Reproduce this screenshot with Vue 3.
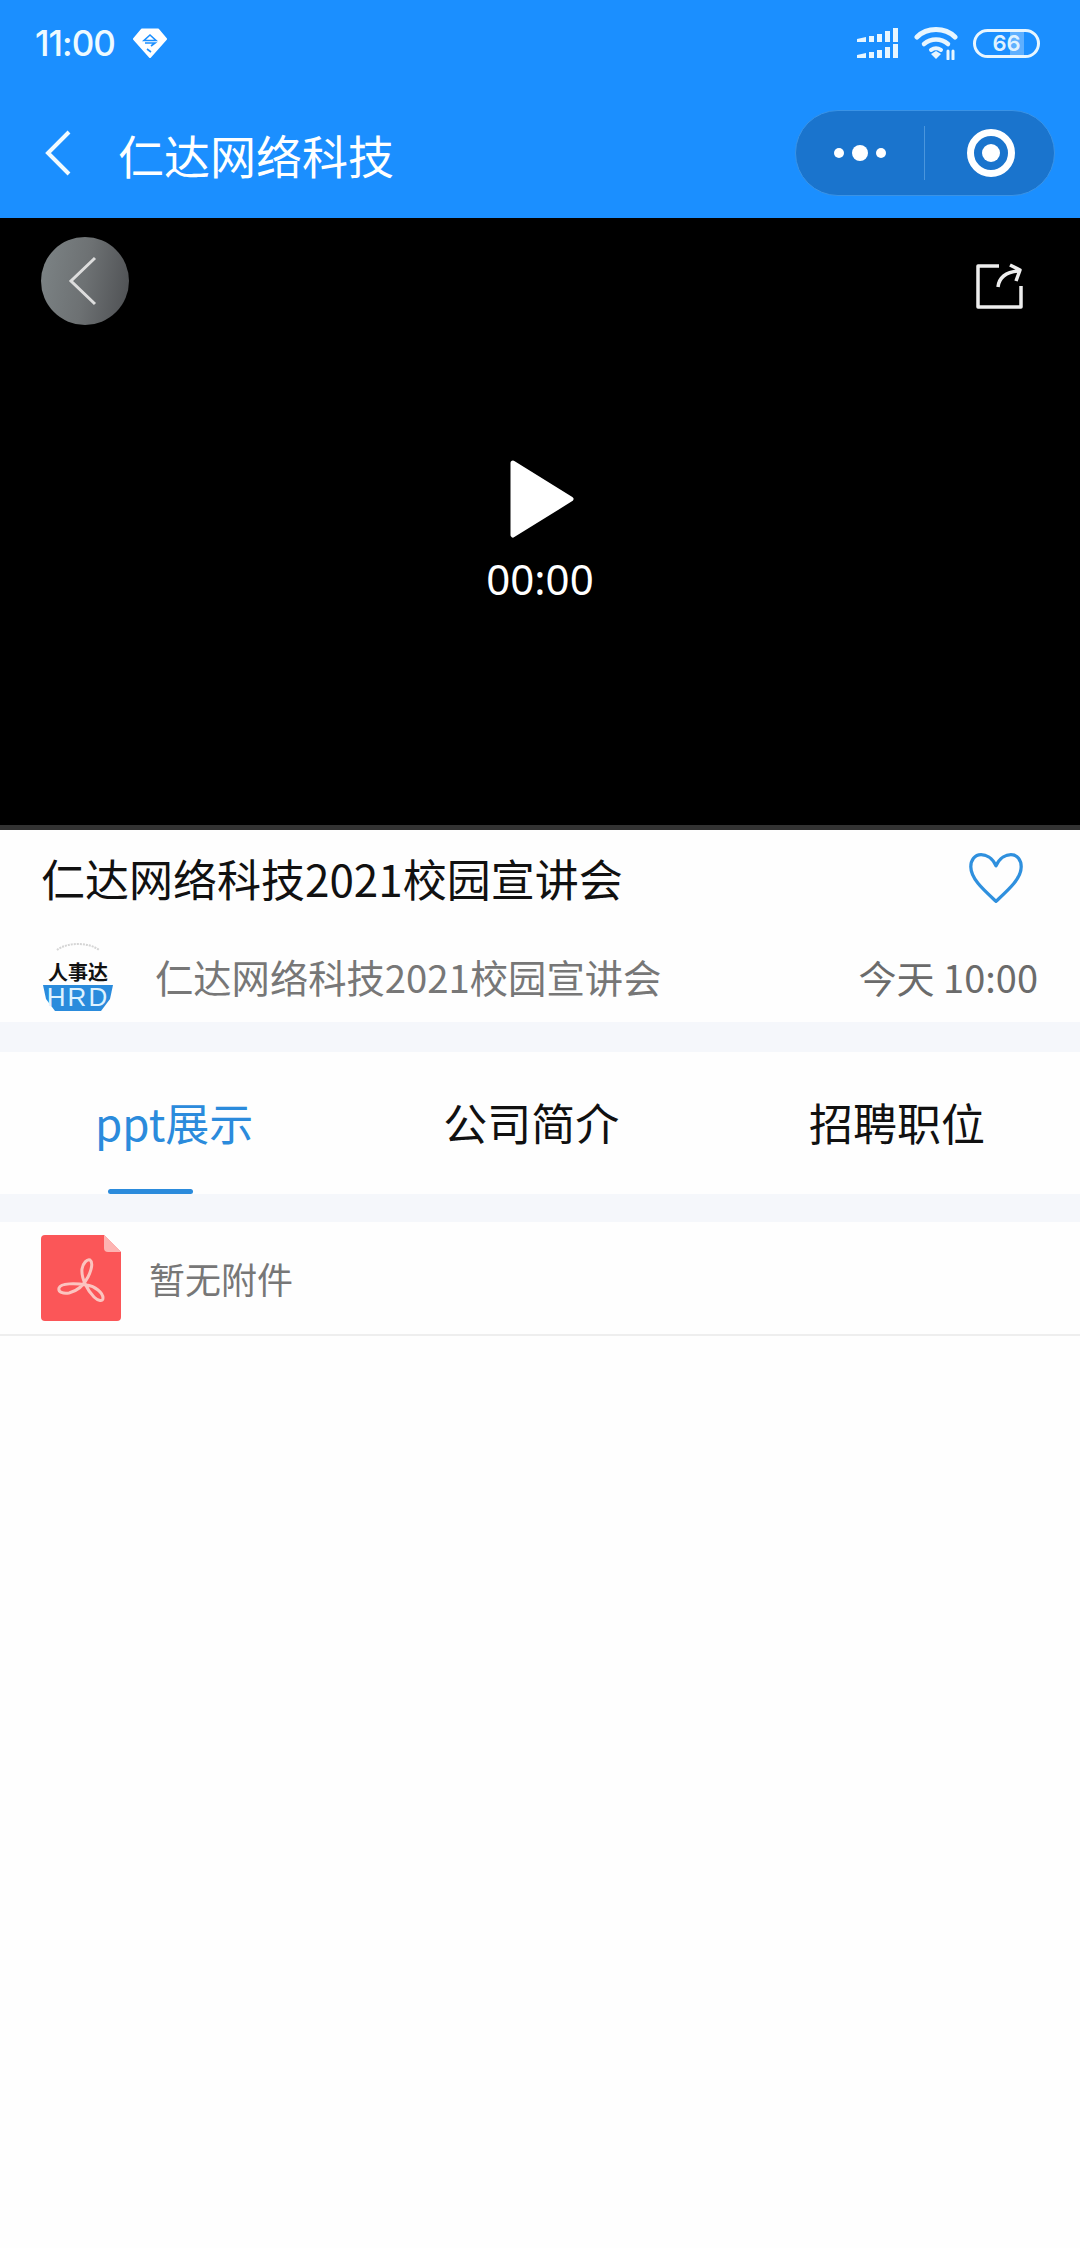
<template>
  <div class="page">
    <header class="topbar">
      <div class="status">
        <div class="status-left">
          <span class="time">11:00</span>
          <svg class="badge" width="34" height="30" viewBox="0 0 34 30">
            <path d="M9 1.5h16l8 9.5L17 29 1 11z" fill="#fff" stroke="#fff" stroke-linejoin="round" stroke-width="2" />
            <path d="M17 7l-6 5.5h12zM12 15h10l-4 3M14 21l4 3" fill="none" stroke="#1b8fff" stroke-width="1.6" />
          </svg>
        </div>
        <div class="status-right">
          <svg width="42" height="31" viewBox="0 0 42 31" fill="#e8f6ff">
            <path d="M0 11l9-2v5H0zM12 8h5v6h-5zM20 6h5v8h-5zM28 3h5v11h-5zM36 0h5v14h-5z" />
            <path d="M0 27l9-2v5H0zM12 24h5v6h-5zM20 22h5v8h-5zM28 19h5v11h-5zM36 16h5v14h-5z" />
          </svg>
          <svg width="44" height="34" viewBox="0 0 44 34" fill="none" stroke="#e8f6ff" stroke-linecap="round">
            <path d="M3 11C13 1 31 1 41 11" stroke-width="5" />
            <path d="M10 18c7-6 17-6 24 0" stroke-width="4.500" />
            <path d="M17 24c3-2 7-2 10 0" stroke-width="4" />
            <path d="M22 33l-5-5 5-3 5 3z" fill="#e8f6ff" stroke="none" />
            <path d="M34 25v8M39 25v8" stroke-width="3" />
          </svg>
          <div class="battery"><span>66</span></div>
        </div>
      </div>
      <div class="nav">
        <svg class="nav-back" width="28" height="48" viewBox="0 0 28 48">
          <path d="M25 3L4 24l21 21" fill="none" stroke="#f2fbff" stroke-width="4" />
        </svg>
        <h1 class="nav-title">仁达网络科技</h1>
        <div class="capsule">
          <div class="capsule-dots">
            <i class="dot"></i><i class="dot big"></i><i class="dot"></i>
          </div>
          <div class="capsule-line"></div>
          <div class="capsule-target"><i></i></div>
        </div>
      </div>
    </header>

    <section class="video">
      <div class="video-top">
        <div class="round-back">
          <svg width="30" height="50" viewBox="0 0 30 50">
            <path d="M27 2L3 25l24 23" fill="none" stroke="#ddd" stroke-width="3" />
          </svg>
        </div>
        <svg class="share" width="48" height="48" viewBox="0 0 48 48" fill="none" stroke="#eee" stroke-width="3.500" stroke-linejoin="round">
          <path d="M24 4H3v41h43V24" />
          <path d="M23 25c1-9 8-15 21-16M35 3l10 5-4 11" />
        </svg>
      </div>
      <div class="video-center">
        <svg width="66" height="80" viewBox="0 0 66 80">
          <path d="M4 4l58 36L4 76z" fill="#fff" stroke="#fff" stroke-width="5" stroke-linejoin="round" />
        </svg>
        <span class="video-time">00:00</span>
      </div>
    </section>

    <section class="info">
      <div class="title-row">
        <h2 class="title">仁达网络科技2021校园宣讲会</h2>
        <svg class="heart" width="56" height="54" viewBox="0 0 60 56">
          <path d="M30 15C26 6 19 3 14 3 7 3 3 9 3 16c0 13 14 25 27 37 13-12 27-24 27-37 0-7-4-13-11-13-5 0-12 3-16 12z" fill="none" stroke="#2f90de" stroke-width="3.500" stroke-linejoin="round" />
        </svg>
      </div>
      <div class="meta-row">
        <svg class="logo" width="70" height="70" viewBox="0 0 70 70">
          <path d="M14 8C24 0 46 0 56 8" fill="none" stroke="#d5d5d5" stroke-width="2" stroke-dasharray="2 1" />
          <text x="35" y="38" text-anchor="middle" class="logo-cn">人事达</text>
          <path d="M0 43h70l-3 14-9 12H12L3 57z" fill="#2a8bdc" />
          <text x="35" y="64" text-anchor="middle" class="logo-en">HRD</text>
        </svg>
        <span class="meta-name">仁达网络科技2021校园宣讲会</span>
        <span class="meta-date">今天 10:00</span>
      </div>
    </section>

    <div class="band"></div>

    <nav class="tabs">
      <div v-for="tab in tabs" :key="tab" class="tab" :class="{ active: tab === current }">
        {{ tab }}
      </div>
    </nav>

    <div class="band thin"></div>

    <div class="attach">
      <svg class="pdf" width="80" height="86" viewBox="0 0 80 86">
        <path d="M4 0h59l17 17v65a4 4 0 0 1-4 4H4a4 4 0 0 1-4-4V4a4 4 0 0 1 4-4z" fill="#fb5658" />
        <path d="M63 0l17 17H67a4 4 0 0 1-4-4z" fill="#fdb4b2" />
        <path d="M18 53C20 48 34 48 46 50 54 51 62 58 62 63 62 67 57 66 53 62 47 56 40 44 41 34 42 28 46 24 49 25 52 27 51 34 47 42 43 50 36 56 28 58 22 59 17 57 18 53z" fill="none" stroke="#fbc4bf" stroke-width="3" stroke-linejoin="round" />
      </svg>
      <span class="attach-text">暂无附件</span>
    </div>
  </div>
</template>

<script setup>
import { ref } from 'vue'

const tabs = ['ppt展示', '公司简介', '招聘职位']
const current = ref('ppt展示')
</script>

<style>
html,
body {
  margin: 0;
  background: #fefefe;
}
</style>

<style scoped>
.page {
  width: 1080px;
  height: 2248px;
  overflow: hidden;
  background: #fefefe;
  font-family: "Noto Sans CJK SC", "Noto Sans", sans-serif;
}

.topbar {
  height: 218px;
  background: #1b8fff;
  box-sizing: border-box;
  color: #fff;
}

.status {
  height: 86px;
  padding: 0 40px 0 35px;
  box-sizing: border-box;
  display: flex;
  justify-content: space-between;
  align-items: center;
}

.status-left {
  display: flex;
  align-items: center;
  gap: 18px;
}

.time {
  font-family: Inter, sans-serif;
  font-size: 35px;
  font-weight: 500;
  color: #eefaff;
  letter-spacing: -1px;
}

.status-right {
  display: flex;
  align-items: center;
  gap: 15px;
}

.battery {
  width: 67px;
  height: 29px;
  box-sizing: border-box;
  border: 3px solid #e8f6ff;
  border-radius: 15px;
  background: linear-gradient(90deg, #1b8fff 55%, #5fb0ff 56%, #5fb0ff 78%, #1b8fff 79%);
  display: flex;
  justify-content: center;
  align-items: center;
  font-family: Inter, sans-serif;
  font-size: 22px;
  font-weight: 600;
  color: #dff2ff;
}

.nav {
  height: 132px;
  padding: 2px 25px 0 44px;
  box-sizing: border-box;
  display: flex;
  align-items: center;
}

.nav-back {
  flex: none;
}

.nav-title {
  margin: 2px 0 0 46px;
  font-size: 46px;
  font-weight: 400;
  line-height: 1;
  flex: 1;
}

.capsule {
  width: 260px;
  height: 86px;
  box-sizing: border-box;
  border: 1px solid #3a93e6;
  border-radius: 43px;
  background: #1a74cd;
  display: flex;
  align-items: center;
}

.capsule-dots {
  width: 128px;
  display: flex;
  justify-content: center;
  align-items: center;
  gap: 8px;
}

.dot {
  width: 10px;
  height: 10px;
  border-radius: 50%;
  background: #fff;
}

.dot.big {
  width: 16px;
  height: 16px;
}

.capsule-line {
  width: 1px;
  height: 54px;
  background: #4a96dd;
}

.capsule-target {
  flex: 1;
  padding-left: 2px;
  display: flex;
  justify-content: center;
  align-items: center;
}

.capsule-target i {
  width: 48px;
  height: 48px;
  box-sizing: border-box;
  border: 7px solid #fff;
  border-radius: 50%;
  display: flex;
  justify-content: center;
  align-items: center;
}

.capsule-target i::after {
  content: "";
  width: 18px;
  height: 18px;
  border-radius: 50%;
  background: #fff;
}

.video {
  position: relative;
  height: 612px;
  box-sizing: border-box;
  background: #000;
  border-bottom: 5px solid #333;
}

.video-top {
  padding: 19px 57px 0 41px;
  display: flex;
  justify-content: space-between;
  align-items: flex-start;
}

.round-back {
  width: 88px;
  height: 88px;
  border-radius: 50%;
  background: linear-gradient(100deg, #7d8486 0%, #6d7173 50%, #4d4f52 100%);
  display: flex;
  justify-content: center;
  align-items: center;
  padding-right: 4px;
  box-sizing: border-box;
}

.share {
  margin-top: 25px;
}

.video-center {
  position: absolute;
  left: 0;
  right: 0;
  top: 241px;
  display: flex;
  flex-direction: column;
  align-items: center;
  color: #fff;
}

.video-center svg {
  margin-left: 4px;
}

.video-time {
  font-size: 42px;
  line-height: 60px;
  margin-top: 10px;
  font-family: "Noto Sans", sans-serif;
}

.info {
  height: 192px;
}

.title-row {
  height: 96px;
  padding: 0 56px 0 41px;
  display: flex;
  justify-content: space-between;
  align-items: center;
}

.title {
  margin: 0;
  font-size: 44px;
  font-weight: 400;
  color: #111;
  line-height: 1.2;
}

.heart {
  flex: none;
}

.meta-row {
  height: 91px;
  padding: 5px 42px 0 43px;
  display: flex;
  align-items: center;
}

.logo {
  flex: none;
}

.logo-cn {
  font-size: 20px;
  font-weight: 700;
  fill: #111;
}

.logo-en {
  font-family: "Liberation Sans", sans-serif;
  font-size: 26px;
  fill: #dff2ff;
  letter-spacing: 2px;
}

.meta-name {
  margin-left: 42px;
  font-size: 38.3px;
  color: #777;
  flex: 1;
}

.meta-date {
  font-size: 38px;
  color: #6b6b6b;
}

.band {
  height: 30px;
  background: #f5f7fb;
}

.band.thin {
  height: 28px;
}

.tabs {
  height: 142px;
  padding: 0 95px 0 95px;
  display: flex;
  justify-content: space-between;
  background: #fefefe;
}

.tab {
  position: relative;
  padding-top: 40px;
  font-size: 44px;
  line-height: 60px;
  color: #111;
}

.tab.active {
  color: #2b8bdc;
}

.tab.active::after {
  content: "";
  position: absolute;
  left: 13px;
  width: 85px;
  bottom: 0;
  height: 5px;
  border-radius: 3px;
  background: #2b8bdc;
}

.attach {
  height: 114px;
  padding: 0 0 0 41px;
  box-sizing: border-box;
  border-bottom: 2px solid #eee;
  display: flex;
  align-items: center;
  gap: 28px;
}

.attach-text {
  font-size: 36px;
  color: #777;
}
</style>
